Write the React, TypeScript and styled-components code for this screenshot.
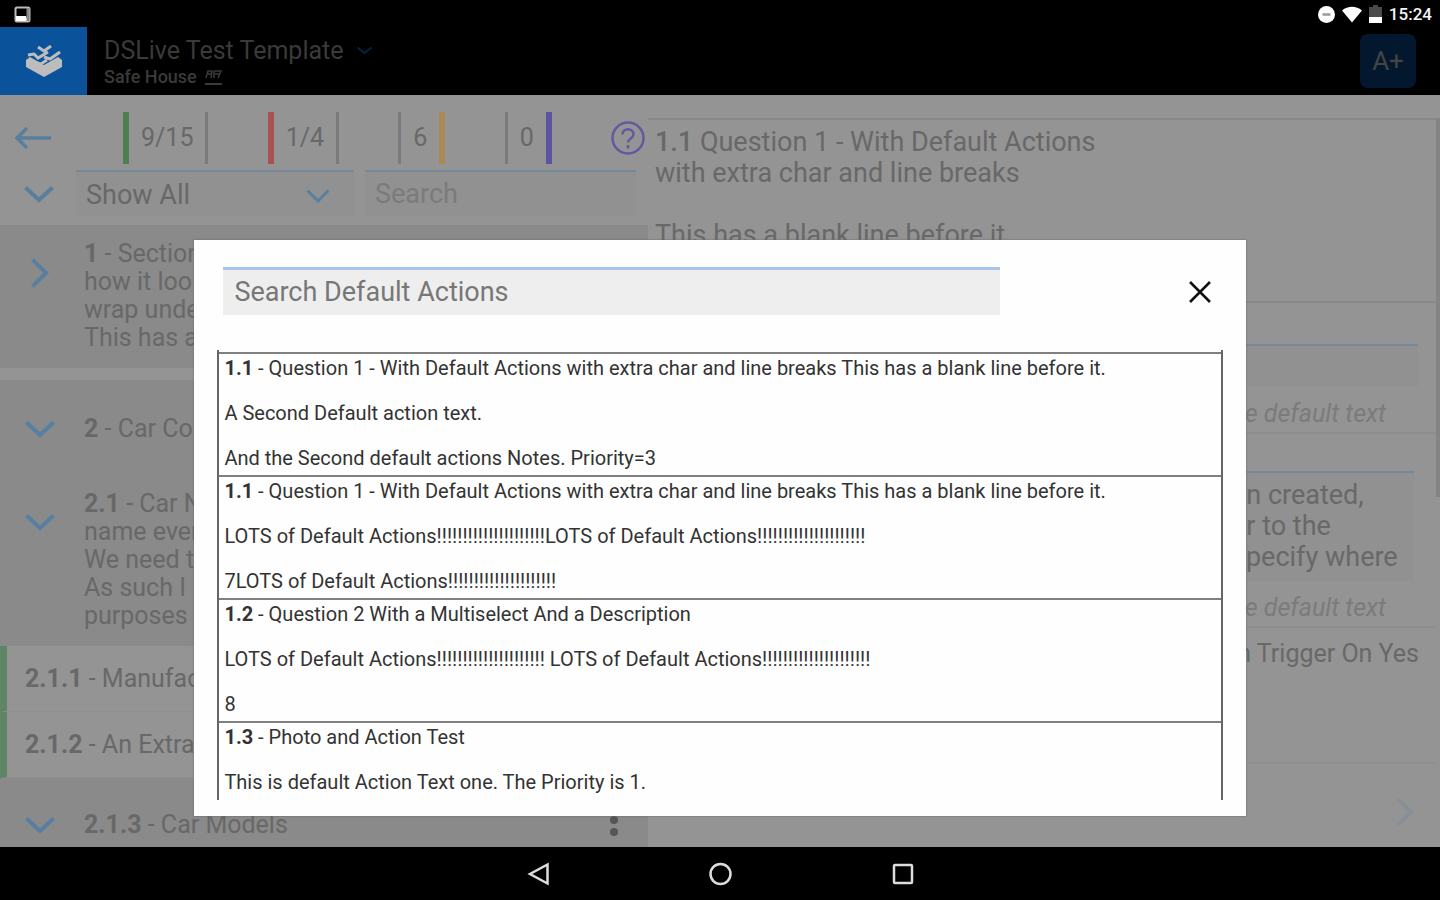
import React from "react";
import styled, { createGlobalStyle, css } from "styled-components";

const c = {
  pane: "#949494",
  section: "#8a8a8a",
  field: "#919191",
  rule: "#888",
  text: "#686868",
  faint: "#7b7b7b",
  blue: "#587f9f",
  line: "#76899a",
  violet: "#625aa0",
};

const GlobalStyle = createGlobalStyle`
  *, *::before, *::after { box-sizing: border-box; }
  body { margin: 0; background: #000; font-family: Roboto, "Liberation Sans", sans-serif; }
  button, input, select, textarea { font: inherit; color: inherit; border: 0; margin: 0; padding: 0; background: none; border-radius: 0; outline: 0; }
  h1, h2, p, ul { margin: 0; padding: 0; font-weight: 400; }
  ul { list-style: none; }
  svg { display: block; flex: none; }
`;

const Screen = styled.div`
  position: relative;
  min-height: 100vh;
  display: grid;
  grid-template-rows: 27px 68px 1fr 53px;
`;

const StatusBar = styled.div`
  display: flex;
  align-items: center;
  justify-content: space-between;
  padding: 1px 8px 0 14px;
  color: #f4f4f4;
  font-size: 17px;
  font-weight: 500;
`;

const StatusIcons = styled.div`
  display: flex;
  align-items: center;
  gap: 7px;
`;

const Header = styled.header`
  display: flex;
  align-items: stretch;
  background: #000;
  color: #3a3a3a;
`;

const LogoButton = styled.button`
  width: 87px;
  display: grid;
  place-items: center;
  background: #0a529a;
`;

const TitleBlock = styled.div`
  flex: 1;
  padding: 9px 0 0 17px;
`;

const Title = styled.h1`
  display: flex;
  align-items: center;
  gap: 12px;
  font-size: 25px;
  line-height: 30px;
`;

const Subtitle = styled.p`
  display: flex;
  align-items: center;
  gap: 8px;
  font-size: 18px;
  font-weight: 500;
  line-height: 22px;
`;

const TextSizeButton = styled.button`
  align-self: center;
  width: 56px;
  height: 54px;
  margin-right: 24px;
  border-radius: 8px;
  background: #03182e;
  color: #444;
  font-size: 26px;
`;

const Main = styled.main`
  display: grid;
  grid-template-columns: 45% 55%;
  background: ${c.pane};
  color: ${c.text};
`;

const LeftPane = styled.section`
  display: flex;
  flex-direction: column;
`;

const StatsRow = styled.div`
  display: flex;
  align-items: center;
  height: 75px;
  padding: 10px 3px 0 14px;
`;

const BackButton = styled.button`
  width: 109px;
`;

const Stats = styled.div`
  flex: 1;
  display: flex;
  align-items: center;
  justify-content: space-between;
`;

const Stat = styled.div<{ $left?: string; $right?: string }>`
  height: 52px;
  padding: 0 12px;
  border-left: ${(p) => (p.$left ? `6px solid ${p.$left}` : "3px solid #7b7b7b")};
  border-right: ${(p) => (p.$right ? `6px solid ${p.$right}` : "3px solid #7b7b7b")};
  font-size: 25px;
  line-height: 51px;
`;

const FilterRow = styled.div`
  display: grid;
  grid-template-columns: 53px 278fr 271fr;
  column-gap: 11px;
  height: 55px;
  padding: 0 12px 0 12px;
`;

const CollapseButton = styled.button`
  display: grid;
  place-items: center;
  height: 48px;
`;

const SelectWrap = styled.label`
  position: relative;
  height: 46px;
  svg {
    position: absolute;
    right: 24px;
    top: 19px;
    pointer-events: none;
  }
`;

const fieldBase = css`
  width: 100%;
  height: 46px;
  border-top: 2px solid ${c.line};
  background: ${c.field};
  padding: 0 10px;
  font-size: 27px;
`;

const Select = styled.select`
  ${fieldBase}
  padding-top: 2px;
  appearance: none;
`;

const SearchInput = styled.input`
  ${fieldBase}
  &::placeholder { color: ${c.faint}; opacity: 1; }
`;

const Sections = styled.ul`
  flex: 1;
  display: flex;
  flex-direction: column;
  background: ${c.section};
`;

const sectionPadding = {
  tall: "15px 24px 16px",
  medium: "35px 24px 32px",
  last: "33px 24px 8px",
};

const SectionItem = styled.li<{ $size: keyof typeof sectionPadding; $gap?: boolean }>`
  display: flex;
  align-items: ${(p) => (p.$size === "tall" ? "flex-start" : "center")};
  padding: ${(p) => sectionPadding[p.$size]};
  border-bottom: ${(p) => (p.$gap ? `12px solid ${c.pane}` : "0")};
  font-size: 25px;
  line-height: 28px;
`;

const Toggle = styled.button<{ $drop?: boolean }>`
  width: 32px;
  height: 28px;
  margin: ${(p) => (p.$drop ? "18px 28px 0 0" : "0 28px 0 0")};
  display: grid;
  place-items: center;
`;

const SectionText = styled.div`
  flex: 1;
`;

const Question = styled.li`
  height: 66px;
  padding-left: 18px;
  border-left: 7px solid #5e8564;
  border-bottom: 1px solid #8f8f8f;
  background: ${c.pane};
  font-size: 25px;
  line-height: 65px;
`;

const RightPane = styled.section`
  display: flex;
  flex-direction: column;
  padding: 23px 4px 0 0;
  background: linear-gradient(#848484, #848484) no-repeat right 23px / 4px 379px;
  font-size: 27px;
  line-height: 31px;
`;

const Prompt = styled.div`
  height: 185px;
  padding: 7px 7px 0;
  border-top: 2px solid ${c.rule};
  border-bottom: 2px solid ${c.rule};
  b { font-weight: 500; }
`;

const Line = styled.p`
  min-height: 28px;
  ${Prompt} & { min-height: 31px; }
`;

const Group = styled.div<{ $top: number }>`
  display: flex;
  flex-direction: column;
  align-items: flex-end;
  padding: ${(p) => p.$top}px 18px 0 0;
  border-bottom: 2px solid #8d8d8d;
`;

const Answer = styled.input`
  width: 190px;
  height: 43px;
  border-top: 2px solid ${c.line};
  background: ${c.field};
`;

const Notes = styled.textarea`
  width: 190px;
  height: 110px;
  margin-right: 4px;
  padding: 7px 0 0 8px;
  border-top: 2px solid ${c.line};
  background: ${c.field};
  line-height: 31px;
  resize: none;
  overflow: hidden;
`;

const Hint = styled.p`
  height: 45px;
  padding: 11px 32px 0 0;
  color: ${c.faint};
  font-size: 25px;
  font-style: italic;
`;

const Trigger = styled.div`
  height: 136px;
  padding: 10px 17px 0 0;
  border-bottom: 2px solid #8f8f8f;
  font-size: 25px;
  text-align: right;
`;

const NextButton = styled.button`
  align-self: flex-end;
  margin: 33px 22px 0 0;
`;

const NavBar = styled.nav`
  display: flex;
  justify-content: center;
  background: #000;
`;

const NavButton = styled.button`
  width: 182px;
  display: grid;
  place-items: center;
`;

const Overlay = styled.div`
  position: absolute;
  inset: 0;
  padding-top: 240px;
`;

const Dialog = styled.div`
  width: 73%;
  margin: 0 auto;
  padding: 27px 23px 16px;
  background: #fefefe;
  box-shadow: 0 0 2px #666;
  color: #333;
`;

const DialogHead = styled.div`
  display: flex;
  align-items: center;
  gap: 188px;
  padding: 0 11px 0 6px;
  margin-bottom: 35px;
`;

const DialogSearch = styled.input`
  flex: 1;
  min-width: 0;
  height: 48px;
  padding: 0 11px 2px;
  border-top: 3px solid #a9c5ea;
  background: #eee;
  font-size: 27px;
  &::placeholder { color: #777; opacity: 1; }
`;

const CloseButton = styled.button`
  width: 24px;
  height: 24px;
`;

const ActionList = styled.ul`
  height: 450px;
  overflow: hidden;
  padding-top: 2px;
  border: solid #666;
  border-width: 0 2px;
`;

const ActionItem = styled.li`
  height: 123px;
  padding: 3px 5px 0;
  border-top: 2px solid #808080;
  display: flex;
  flex-direction: column;
  gap: 23px;
  font-size: 20px;
  line-height: 22px;
  white-space: nowrap;
`;

function Chevron({ w = 30, h = 17, color = c.blue, sw = 4 }: { w?: number; h?: number; color?: string; sw?: number }) {
  return (
    <svg width={w} height={h} viewBox={`0 0 ${w} ${h}`} fill="none" stroke={color} strokeWidth={sw} aria-hidden="true">
      <path d={`M1.5 1.5 L${w / 2} ${h - 3} L${w - 1.5} 1.5`} />
    </svg>
  );
}

function ChevronRight({ color = c.blue }: { color?: string }) {
  return (
    <svg width="18" height="30" viewBox="0 0 18 30" fill="none" stroke={color} strokeWidth="4" aria-hidden="true">
      <path d="M1.5 1.5 L15 15 L1.5 28.5" />
    </svg>
  );
}

function NumberedText({ no, lines }: { no: string; lines: string[] }) {
  return (
    <>
      {lines.map((line, i) => (
        <Line key={i}>
          {i === 0 && <b>{no}</b>}
          {i === 0 ? ` ${line}` : line}
        </Line>
      ))}
    </>
  );
}

const bangs = "!".repeat(21);

const actions = [
  {
    no: "1.1",
    title: "Question 1 - With Default Actions with extra char and line breaks This has a blank line before it.",
    lines: ["A Second Default action text.", "And the Second default actions Notes. Priority=3"],
  },
  {
    no: "1.1",
    title: "Question 1 - With Default Actions with extra char and line breaks This has a blank line before it.",
    lines: [`LOTS of Default Actions${bangs}LOTS of Default Actions${bangs}`, `7LOTS of Default Actions${bangs}`],
  },
  {
    no: "1.2",
    title: "Question 2 With a Multiselect And a Description",
    lines: [`LOTS of Default Actions${bangs} LOTS of Default Actions${bangs}`, "8"],
  },
  { no: "1.3", title: "Photo and Action Test", lines: ["This is default Action Text one. The Priority is 1."] },
];

export default function App() {
  return (
    <>
      <GlobalStyle />
      <Screen>
        <StatusBar>
          <svg width="17" height="17" viewBox="0 0 17 17" aria-hidden="true">
            <rect x="1.5" y="1.5" width="14" height="14" rx="1.5" fill="none" stroke="#bbb" strokeWidth="2" />
            <path d="M2 10h10l2 5H2z" fill="#fff" />
            <path d="M14 2v13" stroke="#888" strokeWidth="3" />
          </svg>
          <StatusIcons>
            <svg width="17" height="17" viewBox="0 0 17 17" aria-hidden="true">
              <circle cx="8.5" cy="8.5" r="8.5" fill="#fff" />
              <path d="M4.5 8.5h8" stroke="#999" strokeWidth="2.5" />
            </svg>
            <svg width="20" height="17" viewBox="0 0 20 17" aria-hidden="true">
              <path d="M0 4.5C6-.5 14-.5 20 4.5L10 16.5z" fill="#fff" />
            </svg>
            <svg width="13" height="18" viewBox="0 0 13 18" aria-hidden="true">
              <path d="M4 0h5v2h4v16H0V2h4z" fill="#4a4a4a" />
              <path d="M0 12h13v6H0z" fill="#fff" />
            </svg>
            <span>15:24</span>
          </StatusIcons>
        </StatusBar>

        <Header>
          <LogoButton aria-label="Home">
            <svg width="36" height="32" viewBox="0 0 36 32" aria-hidden="true">
              <path d="M0 15l4-3 14 8 14-8 4 3v7L18 32 0 22z" fill="#bdbdbd" />
              <path d="M8 13l10-5 10 5-10 6z" fill="#0a529a" />
              <path d="M2 10l6-1 4 4 10-6M12 2l6 4 7-5M18 12l6 2 10-7M11 18l4 1 6-4" fill="none" stroke="#bdbdbd" strokeWidth="3" />
            </svg>
          </LogoButton>
          <TitleBlock>
            <Title>
              DSLive Test Template
              <Chevron w={17} h={10} color="#06243d" sw={2} />
            </Title>
            <Subtitle>
              Safe House
              <svg width="17" height="18" viewBox="0 0 17 18" fill="none" stroke="#3a3a3a" aria-hidden="true">
                <path d="M0 16h17" strokeWidth="2" />
                <path d="M1 10l2-7h4l-1 7M3 6h4M9 3v7M9 3h7l-3 7M10 6h5" strokeWidth="1.5" />
              </svg>
            </Subtitle>
          </TitleBlock>
          <TextSizeButton>A+</TextSizeButton>
        </Header>

        <Main>
          <LeftPane>
            <StatsRow>
              <BackButton aria-label="Back">
                <svg width="38" height="24" viewBox="0 0 38 24" fill="none" stroke={c.blue} strokeWidth="3.5" aria-hidden="true">
                  <path d="M37 12H3M13 2L3 12l10 10" />
                </svg>
              </BackButton>
              <Stats>
                <Stat $left="#4f7f50">9/15</Stat>
                <Stat $left="#a85252">1/4</Stat>
                <Stat $right="#a98a55">6</Stat>
                <Stat $right="#5c54a0">0</Stat>
                <svg width="34" height="34" viewBox="0 0 34 34" fill="none" stroke={c.violet} strokeWidth="2.5" aria-label="Help">
                  <circle cx="17" cy="17" r="15.5" />
                  <path d="M11.5 13.5c0-7 11-7 11 0 0 4-5.5 4-5.5 8M17 24v3.5" />
                </svg>
              </Stats>
            </StatsRow>
            <FilterRow>
              <CollapseButton aria-label="Collapse all">
                <Chevron />
              </CollapseButton>
              <SelectWrap>
                <Select aria-label="Filter">
                  <option>Show All</option>
                </Select>
                <Chevron w={24} h={15} sw={3} />
              </SelectWrap>
              <SearchInput aria-label="Search" placeholder="Search" />
            </FilterRow>
            <Sections>
              <SectionItem $size="tall" $gap>
                <Toggle $drop aria-label="Expand section 1">
                  <ChevronRight />
                </Toggle>
                <SectionText>
                  <NumberedText no="1" lines={["- Section", "how it loo", "wrap unde", "This has a"]} />
                </SectionText>
              </SectionItem>
              <SectionItem $size="medium">
                <Toggle aria-label="Collapse section 2">
                  <Chevron />
                </Toggle>
                <SectionText>
                  <NumberedText no="2" lines={["- Car Co"]} />
                </SectionText>
              </SectionItem>
              <SectionItem $size="tall">
                <Toggle $drop aria-label="Collapse section 2.1">
                  <Chevron />
                </Toggle>
                <SectionText>
                  <NumberedText no="2.1" lines={["- Car N", "name ever", "We need t", "As such I", "purposes"]} />
                </SectionText>
              </SectionItem>
              <Question>
                <b>2.1.1</b> - Manufac
              </Question>
              <Question>
                <b>2.1.2</b> - An Extra
              </Question>
              <SectionItem $size="last">
                <Toggle aria-label="Collapse section 2.1.3">
                  <Chevron />
                </Toggle>
                <SectionText>
                  <NumberedText no="2.1.3" lines={["- Car Models"]} />
                </SectionText>
                <button aria-label="More options">
                  <svg width="20" height="28" viewBox="0 0 20 28" fill="#555" aria-hidden="true">
                    <circle cx="10" cy="-1" r="4" />
                    <circle cx="10" cy="9" r="4" />
                    <circle cx="10" cy="21" r="4" />
                  </svg>
                </button>
              </SectionItem>
            </Sections>
          </LeftPane>

          <RightPane>
            <Prompt>
              <NumberedText
                no="1.1"
                lines={[
                  "Question 1 - With Default Actions",
                  "with extra char and line breaks",
                  "",
                  "This has a blank line before it.",
                ]}
              />
            </Prompt>
            <Group $top={41}>
              <Answer aria-label="Answer" />
              <Hint>e default text</Hint>
            </Group>
            <Group $top={37}>
              <Notes aria-label="Notes" defaultValue={"en created,\ner to the\nspecify where"} />
              <Hint>e default text</Hint>
            </Group>
            <Trigger>n Trigger On Yes</Trigger>
            <NextButton aria-label="Next">
              <ChevronRight color="#888f96" />
            </NextButton>
          </RightPane>
        </Main>

        <NavBar>
          <NavButton aria-label="Back">
            <svg width="24" height="24" viewBox="0 0 24 24" fill="none" stroke="#ddd" strokeWidth="2.5" aria-hidden="true">
              <path d="M21.5 2.5v19L4 12z" />
            </svg>
          </NavButton>
          <NavButton aria-label="Home">
            <svg width="24" height="24" viewBox="0 0 24 24" fill="none" stroke="#ddd" strokeWidth="2.5" aria-hidden="true">
              <circle cx="12.5" cy="12" r="10" />
            </svg>
          </NavButton>
          <NavButton aria-label="Recent apps">
            <svg width="24" height="24" viewBox="0 0 24 24" fill="none" stroke="#ddd" strokeWidth="2.5" aria-hidden="true">
              <rect x="4" y="3" width="18" height="18" rx="1" />
            </svg>
          </NavButton>
        </NavBar>

        <Overlay>
          <Dialog role="dialog" aria-label="Default actions">
            <DialogHead>
              <DialogSearch aria-label="Search Default Actions" placeholder="Search Default Actions" />
              <CloseButton aria-label="Close">
                <svg width="24" height="24" viewBox="0 0 24 24" fill="none" stroke="#111" strokeWidth="2.5" aria-hidden="true">
                  <path d="M2 3l20 20M22 3L2 23" />
                </svg>
              </CloseButton>
            </DialogHead>
            <ActionList>
              {actions.map((a, i) => (
                <ActionItem key={i}>
                  <p>
                    <b>{a.no}</b> - {a.title}
                  </p>
                  {a.lines.map((l) => (
                    <p key={l}>{l}</p>
                  ))}
                </ActionItem>
              ))}
            </ActionList>
          </Dialog>
        </Overlay>
      </Screen>
    </>
  );
}
